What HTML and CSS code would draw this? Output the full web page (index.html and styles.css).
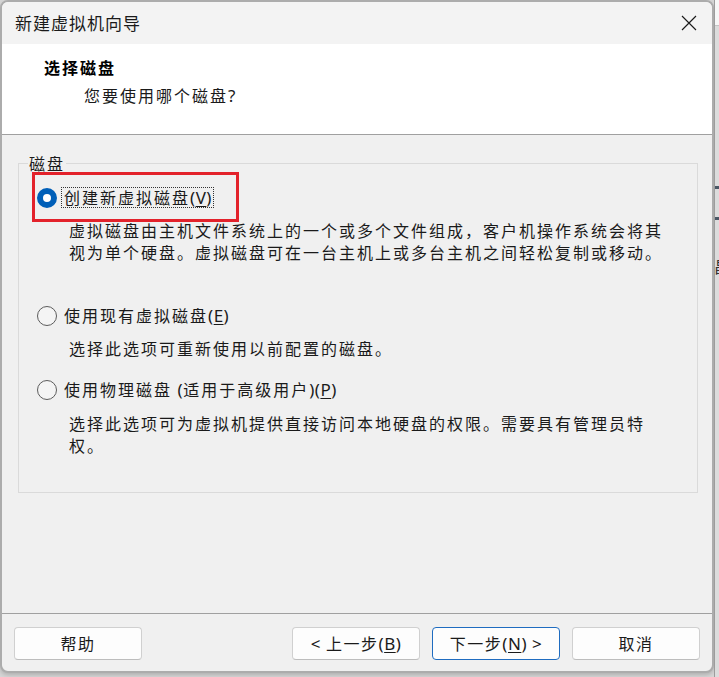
FILE: index.html
```html
<!DOCTYPE html>
<html lang="zh-CN">
<head>
<meta charset="utf-8">
<title>新建虚拟机向导</title>
<link rel="stylesheet" href="styles.css">
</head>
<body>
<div class="screen">
  <div class="window">
    <div class="titlebar">
      <span class="title">新建虚拟机向导</span>
      <svg class="close" width="16" height="16" viewBox="0 0 16 16" aria-label="关闭"><path d="M1 1 L15 15 M15 1 L1 15" stroke="#1a1a1a" stroke-width="1.15" fill="none"/></svg>
    </div>
    <div class="header">
      <div class="h-title">选择磁盘</div>
      <div class="h-sub">您要使用哪个磁盘<span class="latin">?</span></div>
    </div>
    <div class="content">
      <fieldset class="group">
        <legend>磁盘</legend>
        <div class="options">
          <div class="option opt1">
            <div class="row"><span class="radio checked"></span><span class="label focus">创建新虚拟磁盘<span class="latin">(<u>V</u>)</span></span></div>
            <div class="desc">虚拟磁盘由主机文件系统上的一个或多个文件组成，客户机操作系统会将其<br>视为单个硬盘。虚拟磁盘可在一台主机上或多台主机之间轻松复制或移动。</div>
            <div class="annot"></div>
          </div>
          <div class="option opt2">
            <div class="row"><span class="radio"></span><span class="label">使用现有虚拟磁盘<span class="latin">(<u>E</u>)</span></span></div>
            <div class="desc">选择此选项可重新使用以前配置的磁盘。</div>
          </div>
          <div class="option opt3">
            <div class="row"><span class="radio"></span><span class="label">使用物理磁盘 <span class="latin">(</span>适用于高级用户<span class="latin">)(<u>P</u>)</span></span></div>
            <div class="desc d3">选择此选项可为虚拟机提供直接访问本地硬盘的权限。需要具有管理员特<br>权。</div>
          </div>
        </div>
      </fieldset>
    </div>
    <div class="footer">
      <button class="btn">帮助</button>
      <div class="spacer"></div>
      <button class="btn"><span class="latin">&lt;</span> 上一步<span class="latin">(<u>B</u>)</span></button>
      <button class="btn primary">下一步<span class="latin">(<u>N</u>) &gt;</span></button>
      <button class="btn">取消</button>
    </div>
  </div>
  <div class="backdrop">
    <div class="bd-top"></div>
    <div class="bd-mark m1"></div>
    <div class="bd-mark m2"></div>
    <span class="bd-glyph">昌</span>
  </div>
</div>
</body>
</html>
```
FILE: styles.css
```css
* { box-sizing: border-box; }
html, body { margin: 0; padding: 0; }
body {
  width: 719px;
  height: 677px;
  overflow: hidden;
  background: #d6d6d6;
  font-family: "Noto Sans CJK SC", sans-serif;
  color: #1a1a1a;
}
.latin { font-family: "Noto Sans", "Noto Sans CJK SC", sans-serif; letter-spacing: 0.5px; }
.screen { display: flex; height: 677px; }
.window {
  flex: none;
  width: 714px;
  height: 673px;
  border: 2px solid #acacac;
  border-radius: 8px;
  background: #f0f0f0;
  display: flex;
  flex-direction: column;
  overflow: hidden;
  box-shadow: 0 2px 4px rgba(0,0,0,0.18);
}
.titlebar {
  flex: none;
  height: 42px;
  background: #f3f3f3;
  display: flex;
  align-items: center;
  justify-content: space-between;
  padding: 0 15px 0 13px;
}
.title { font-size: 17px; letter-spacing: 1px; line-height: 20px; color: #1a1a1a; }
.close { display: block; margin-top: -1px; }
.header {
  flex: none;
  height: 91px;
  background: #fff;
  border-bottom: 1px solid #a0a0a0;
  padding: 12px 0 0 42px;
  font-size: 16px;
  letter-spacing: 2px;
  line-height: 23px;
}
.h-title { font-weight: 700; color: #000; }
.h-sub { margin-top: 5px; padding-left: 40px; color: #1a1a1a; }
.h-sub .latin { font-size: 17px; }
.content {
  flex: 1;
  padding: 19px 14px 0 16px;
}
.group {
  margin: 0;
  padding: 0 18px 36px 18px;
  border: 1px solid #dadada;
  min-width: 0;
}
.group legend {
  margin-left: -9px;
  padding: 0 1px;
  font-size: 16px;
  line-height: 18px;
  letter-spacing: 2px;
  color: #1a1a1a;
}
.options { padding-top: 14px; }
.option { position: relative; }
.opt2 { margin-top: 41px; }
.opt3 { margin-top: 19px; }
.row {
  display: flex;
  align-items: center;
  height: 23px;
}
.radio {
  flex: none;
  width: 20px;
  height: 20px;
  border-radius: 50%;
  border: 1px solid #5c5c5c;
  background: #f4f4f4;
  margin-right: 4px;
}
.radio.checked {
  border: 6px solid #005fb8;
  background: #fff;
}
.label {
  font-size: 16px;
  letter-spacing: 2px;
  line-height: 19px;
  padding: 0 1px 0 2px;
  border: 1px dotted transparent;
  white-space: nowrap;
  color: #1a1a1a;
}
.label .latin { font-size: 17px; }
.label.focus { border-color: #333; }
.label u, .btn u { text-underline-offset: 2px; }
.desc {
  margin-top: 10px;
  padding-left: 32px;
  font-size: 16px;
  letter-spacing: 2px;
  line-height: 22px;
  white-space: nowrap;
  color: #1a1a1a;
}
.desc.d3 { margin-top: 11px; }
.annot {
  position: absolute;
  left: -5px;
  top: -14px;
  width: 207px;
  height: 50px;
  border: 3px solid #e3222b;
}
.footer {
  flex: none;
  height: 58px;
  border-top: 1px solid #a0a0a0;
  display: flex;
  align-items: flex-start;
  gap: 12px;
  padding: 13px 12px 0 12px;
}
.spacer { flex: 1; }
.btn {
  width: 128px;
  height: 33px;
  border: 1px solid #d0d0d0;
  border-bottom-color: #bdbdbd;
  border-radius: 4px;
  background: #fdfdfd;
  font-family: "Noto Sans CJK SC", sans-serif;
  font-size: 16px;
  letter-spacing: 1.5px;
  color: #1a1a1a;
  padding: 0;
  line-height: 31px;
}
.btn .latin { font-size: 17px; }
.btn.primary { border-color: #1f6cc0; }
.backdrop {
  flex: 1;
  position: relative;
  height: 677px;
  background: #dcdcdc;
  border-left: 1px solid #9c9c9c;
}
.bd-top {
  height: 26px;
  background: #f7f7f7;
  border-bottom: 1px solid #c4c4c4;
}
.bd-mark {
  position: absolute;
  left: 0;
  width: 5px;
  height: 3px;
  background: #4b5866;
}
.m1 { top: 186px; }
.m2 { top: 217px; }
.bd-glyph {
  position: absolute;
  left: -1px;
  top: 257px;
  font-size: 16px;
  line-height: 18px;
  color: #333;
}
```
